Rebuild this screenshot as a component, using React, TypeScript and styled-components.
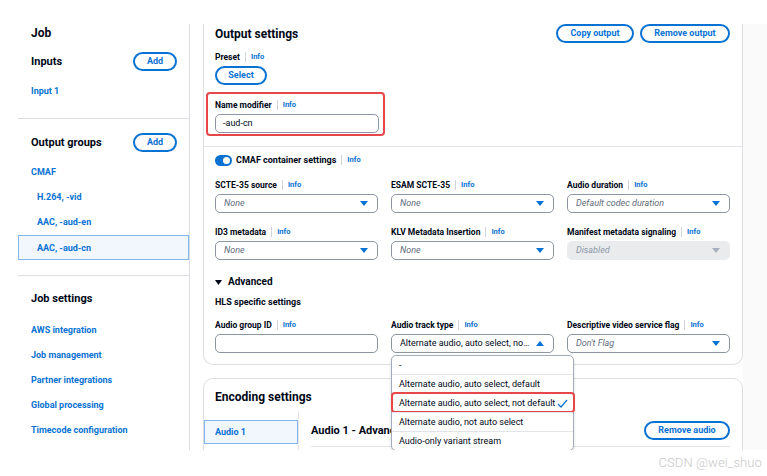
import React from "react";
import styled, { createGlobalStyle } from "styled-components";

const BLUE = "#0972d3";
const TEXT = "#000716";
const MUTED = "#5f6b7a";
const LINE = "#e3e4e8";
const FONT = `Roboto, "Liberation Sans", Arial, sans-serif`;

const GlobalStyle = createGlobalStyle`
  html, body { margin: 0; padding: 0; background: #ffffff; }
  body { font-family: ${FONT}; color: ${TEXT}; }
  *, *::before, *::after { box-sizing: border-box; }
`;

const Page = styled.div`
  position: relative;
  width: 767px;
  height: 476px;
  overflow: hidden;
  background: #fff;
`;

const Frame = styled.div`
  display: flex;
  margin-top: 24px;
  height: 426px;
  padding-left: 18px;
  overflow: hidden;
`;

/* ---------- Sidebar ---------- */
const Sidebar = styled.nav`
  width: 172px;
  flex: none;
  border-right: 1px solid #dcdde1;
  display: flex;
  flex-direction: column;
`;

const SideSection = styled.section<{ $pt: number; $pb?: number; $divider?: boolean }>`
  display: flex;
  flex-direction: column;
  padding-top: ${(p) => p.$pt}px;
  padding-bottom: ${(p) => p.$pb ?? 0}px;
  border-bottom: ${(p) => (p.$divider ? "1px solid #dcdde1" : "none")};
`;

const SideTitle = styled.h2`
  margin: 0;
  padding-left: 13px;
  font: 700 12px/16px ${FONT};
  color: ${TEXT};
`;

const SideHeadRow = styled.div<{ $mt?: number }>`
  display: flex;
  align-items: center;
  justify-content: space-between;
  height: 19px;
  margin-top: ${(p) => p.$mt ?? 0}px;
  padding: 0 12px 0 13px;
`;

const SideHeading = styled.h3<{ $inset?: boolean }>`
  margin: 0;
  padding-left: ${(p) => (p.$inset ? 13 : 0)}px;
  font: 700 11px/16px ${FONT};
  color: ${TEXT};
`;

const NavList = styled.ul<{ $mt: number }>`
  list-style: none;
  margin: ${(p) => p.$mt}px 0 0;
  padding: 0;
`;

const NavItem = styled.li<{ $indent: number; $active?: boolean }>`
  height: 25px;
  display: flex;
  align-items: center;
  padding-left: ${(p) => (p.$active ? p.$indent - 1 : p.$indent)}px;
  padding-bottom: ${(p) => (p.$active ? 0 : 2)}px;
  font: 700 9px/12px ${FONT};
  color: ${BLUE};
  white-space: nowrap;
  background: ${(p) => (p.$active ? "#f1f7fd" : "transparent")};
  border: ${(p) => (p.$active ? "1px solid #7fb6ee" : "none")};
`;

/* ---------- Buttons ---------- */
const PillButton = styled.button<{ $w: number }>`
  width: ${(p) => p.$w}px;
  height: 19px;
  padding: 0;
  flex: none;
  border: 2px solid ${BLUE};
  border-radius: 20px;
  background: #fff;
  color: ${BLUE};
  font: 700 9px/15px ${FONT};
  display: inline-flex;
  align-items: center;
  justify-content: center;
`;

const ButtonGroup = styled.div`
  display: flex;
  gap: 6px;
`;

/* ---------- Main ---------- */
const Main = styled.main`
  flex: 1;
  display: flex;
  min-width: 0;
`;

const MainColumn = styled.div`
  width: 553px;
  flex: none;
  padding-left: 13px;
  display: flex;
  flex-direction: column;
  gap: 13px;
`;

const RightGutter = styled.div`
  flex: 1;
  background: #fafafa;
`;

const Card = styled.section<{ $cutTop?: boolean }>`
  flex: none;
  background: #fff;
  border: 1px solid #dedfe3;
  border-top: ${(p) => (p.$cutTop ? "none" : "1px solid #dedfe3")};
  border-radius: ${(p) => (p.$cutTop ? "0 0 10px 10px" : "10px 10px 0 0")};
`;

const CardSection = styled.div<{ $pt: number; $pb: number; $divider?: boolean }>`
  display: flex;
  flex-direction: column;
  padding: ${(p) => p.$pt}px 12px ${(p) => p.$pb}px 11px;
  border-bottom: ${(p) => (p.$divider ? `1px solid ${LINE}` : "none")};
`;

const HeaderRow = styled.div`
  display: flex;
  align-items: center;
  justify-content: space-between;
  height: 19px;
`;

const CardTitle = styled.h2`
  margin: 0;
  font: 700 12px/16px ${FONT};
  color: ${TEXT};
`;

const Field = styled.div<{ $mt?: number; $w?: number }>`
  position: relative;
  display: flex;
  flex-direction: column;
  gap: 2px;
  min-width: 0;
  margin-top: ${(p) => p.$mt ?? 0}px;
  width: ${(p) => (p.$w ? `${p.$w}px` : "auto")};
`;

const HighlightedField = styled(Field)`
  &::after {
    content: "";
    position: absolute;
    inset: -6px -6px -3px -9px;
    border: 2px solid #e8474a;
    border-radius: 4px;
    pointer-events: none;
  }
`;

const LabelRow = styled.div`
  display: flex;
  align-items: center;
  height: 14px;
  font: 700 8.5px/14px ${FONT};
  color: ${TEXT};
  white-space: nowrap;
`;

const InfoSep = styled.span`
  width: 1px;
  height: 10px;
  background: #d1d5db;
  margin: 0 5px;
`;

const InfoLink = styled.span`
  color: ${BLUE};
  font: 700 7.5px/14px ${FONT};
`;

const InputBox = styled.div`
  height: 19px;
  border: 1px solid #8c96a3;
  border-radius: 5px;
  background: #fff;
  display: flex;
  align-items: center;
  padding: 0 7px;
  font: 400 9px/17px ${FONT};
  color: ${TEXT};
`;

const SelectBox = styled.div<{ $disabled?: boolean }>`
  height: 19px;
  border: 1px solid ${(p) => (p.$disabled ? "#e9ebed" : "#8c96a3")};
  border-radius: 5px;
  background: ${(p) => (p.$disabled ? "#e9ebed" : "#fff")};
  display: flex;
  align-items: center;
  gap: 6px;
  padding: 0 9px 0 8px;
`;

const SelectValue = styled.span<{ $placeholder?: boolean; $disabled?: boolean }>`
  flex: 1;
  min-width: 0;
  overflow: hidden;
  white-space: nowrap;
  text-overflow: ellipsis;
  font-family: ${FONT};
  font-size: 9px;
  line-height: 17px;
  font-style: ${(p) => (p.$placeholder ? "italic" : "normal")};
  color: ${(p) => (p.$disabled ? "#8d99a8" : p.$placeholder ? MUTED : TEXT)};
`;

const PillSlot = styled.div`
  display: flex;
`;

const ToggleRow = styled.div`
  display: flex;
  align-items: center;
  height: 14px;
  gap: 4px;
`;

const Toggle = styled.span`
  position: relative;
  width: 17px;
  height: 11px;
  flex: none;
  border-radius: 6px;
  background: ${BLUE};
  &::after {
    content: "";
    position: absolute;
    right: 2px;
    top: 2px;
    width: 7px;
    height: 7px;
    border-radius: 50%;
    background: #fff;
  }
`;

const ToggleLabel = styled(LabelRow)`
  font-size: 9px;
`;

const FieldGrid = styled.div<{ $mt: number }>`
  display: grid;
  grid-template-columns: repeat(3, 1fr);
  column-gap: 13px;
  row-gap: 12px;
  margin-top: ${(p) => p.$mt}px;
`;

const ExpandRow = styled.div<{ $mt: number }>`
  display: flex;
  align-items: center;
  gap: 6px;
  height: 14px;
  margin-top: ${(p) => p.$mt}px;
  font: 700 10px/14px ${FONT};
  color: ${TEXT};
`;

const SubHeading = styled.div<{ $mt: number }>`
  height: 14px;
  margin-top: ${(p) => p.$mt}px;
  font: 700 9px/14px ${FONT};
  color: ${TEXT};
`;

/* ---------- Dropdown ---------- */
const Dropdown = styled.ul`
  position: absolute;
  top: calc(100% + 2px);
  left: 0;
  width: 183px;
  margin: 0;
  padding: 0;
  list-style: none;
  background: #fff;
  border: 1px solid #a3acb9;
  border-radius: 5px;
  box-shadow: 0 1px 3px rgba(0, 7, 22, 0.15);
  z-index: 10;
`;

const Option = styled.li<{ $highlighted?: boolean }>`
  position: relative;
  height: 18px;
  display: flex;
  align-items: center;
  justify-content: space-between;
  padding: 0 5px 0 7px;
  font: 400 9px/12px ${FONT};
  color: ${TEXT};
  white-space: nowrap;
  & + & {
    border-top: 1px solid ${LINE};
    height: 19px;
  }
  ${(p) =>
    p.$highlighted
      ? `&::after {
    content: "";
    position: absolute;
    inset: -2px -2px -1px -1px;
    border: 2px solid #e8474a;
    border-radius: 4px;
  }`
      : ""}
`;

/* ---------- Encoding ---------- */
const EncodingHeading = styled.div`
  padding: 10px 12px 0 11px;
`;

const EncodingBody = styled.div`
  display: flex;
  margin-top: 6px;
  height: 60px;
`;

const TabsColumn = styled.div`
  width: 95px;
  flex: none;
  border-right: 1px solid ${LINE};
  padding-top: 9px;
`;

const Tab = styled.div<{ $active?: boolean }>`
  height: 24px;
  display: flex;
  align-items: center;
  padding-left: 10px;
  background: ${(p) => (p.$active ? "#f1f7fd" : "transparent")};
  border: 1px solid ${(p) => (p.$active ? "#7fb6ee" : "transparent")};
  font: 700 9px/12px ${FONT};
  color: ${BLUE};
`;

const TabContent = styled.div`
  flex: 1;
  min-width: 0;
  padding: 10px 12px 0 12px;
`;

const TabHeader = styled.div`
  display: flex;
  align-items: center;
  justify-content: space-between;
  height: 26px;
  padding-bottom: 6px;
  border-bottom: 1px solid ${LINE};
`;

const TabTitle = styled.h3`
  margin: 0;
  font: 700 11px/16px ${FONT};
  color: ${TEXT};
  white-space: nowrap;
`;

const Watermark = styled.div`
  position: absolute;
  right: 5px;
  bottom: 5px;
  font: 300 13px/16px ${FONT};
  color: #c9c9c9;
  letter-spacing: 0.1px;
`;

/* ---------- Icons ---------- */
const Caret = ({ up, color = BLUE }: { up?: boolean; color?: string }) => (
  <svg width="8" height="5" viewBox="0 0 8 5" style={{ flex: "none" }}>
    <polygon points={up ? "0,5 8,5 4,0" : "0,0 8,0 4,5"} fill={color} />
  </svg>
);

const SmallCaret = () => (
  <svg width="7" height="5" viewBox="0 0 7 5">
    <polygon points="0,0 7,0 3.5,5" fill={TEXT} />
  </svg>
);

const Check = () => (
  <svg width="11" height="9" viewBox="0 0 11 9" style={{ flex: "none" }}>
    <polyline points="1,5 4,8 10,1" fill="none" stroke={BLUE} strokeWidth="1.2" />
  </svg>
);

/* ---------- Pieces ---------- */
const Label = ({ text }: { text: string }) => (
  <LabelRow>
    {text}
    <InfoSep />
    <InfoLink>Info</InfoLink>
  </LabelRow>
);

type SelectSpec = {
  label: string;
  value: string;
  placeholder?: boolean;
  disabled?: boolean;
};

const SelectField = ({ label, value, placeholder = true, disabled }: SelectSpec) => (
  <Field>
    <Label text={label} />
    <SelectBox $disabled={disabled}>
      <SelectValue $placeholder={placeholder} $disabled={disabled}>
        {value}
      </SelectValue>
      <Caret color={disabled ? "#a7b1bd" : BLUE} />
    </SelectBox>
  </Field>
);

const rows: SelectSpec[] = [
  { label: "SCTE-35 source", value: "None" },
  { label: "ESAM SCTE-35", value: "None" },
  { label: "Audio duration", value: "Default codec duration" },
  { label: "ID3 metadata", value: "None" },
  { label: "KLV Metadata Insertion", value: "None" },
  { label: "Manifest metadata signaling", value: "Disabled", disabled: true },
];

const options = [
  "-",
  "Alternate audio, auto select, default",
  "Alternate audio, auto select, not default",
  "Alternate audio, not auto select",
  "Audio-only variant stream",
];

const outputItems = [
  { text: "CMAF", indent: 13 },
  { text: "H.264, -vid", indent: 19 },
  { text: "AAC, -aud-en", indent: 19 },
  { text: "AAC, -aud-cn", indent: 19, active: true },
];

const jobSettings = [
  "AWS integration",
  "Job management",
  "Partner integrations",
  "Global processing",
  "Timecode configuration",
  "Ad signaling",
];

export default function App() {
  return (
    <Page>
      <GlobalStyle />
      <Frame>
        <Sidebar>
          <SideSection $pt={1} $pb={14} $divider>
            <SideTitle>Job</SideTitle>
            <SideHeadRow $mt={11}>
              <SideHeading>Inputs</SideHeading>
              <PillButton $w={44}>Add</PillButton>
            </SideHeadRow>
            <NavList $mt={8}>
              <NavItem $indent={13}>Input 1</NavItem>
            </NavList>
          </SideSection>
          <SideSection $pt={14} $pb={15} $divider>
            <SideHeadRow>
              <SideHeading>Output groups</SideHeading>
              <PillButton $w={44}>Add</PillButton>
            </SideHeadRow>
            <NavList $mt={8}>
              {outputItems.map((it) => (
                <NavItem key={it.text} $indent={it.indent} $active={it.active}>
                  {it.text}
                </NavItem>
              ))}
            </NavList>
          </SideSection>
          <SideSection $pt={15}>
            <SideHeading $inset>Job settings</SideHeading>
            <NavList $mt={11}>
              {jobSettings.map((t) => (
                <NavItem key={t} $indent={13}>
                  {t}
                </NavItem>
              ))}
            </NavList>
          </SideSection>
        </Sidebar>

        <Main>
          <MainColumn>
            <Card $cutTop>
              <CardSection $pt={0} $pb={13} $divider>
                <HeaderRow>
                  <CardTitle>Output settings</CardTitle>
                  <ButtonGroup>
                    <PillButton $w={78}>Copy output</PillButton>
                    <PillButton $w={90}>Remove output</PillButton>
                  </ButtonGroup>
                </HeaderRow>
                <Field $mt={7}>
                  <Label text="Preset" />
                  <PillSlot>
                    <PillButton $w={52}>Select</PillButton>
                  </PillSlot>
                </Field>
                <HighlightedField $mt={13} $w={164}>
                  <Label text="Name modifier" />
                  <InputBox>-aud-cn</InputBox>
                </HighlightedField>
              </CardSection>

              <CardSection $pt={6} $pb={11}>
                <ToggleRow>
                  <Toggle />
                  <ToggleLabel>
                    CMAF container settings
                    <InfoSep />
                    <InfoLink>Info</InfoLink>
                  </ToggleLabel>
                </ToggleRow>
                <FieldGrid $mt={11}>
                  {rows.map((r) => (
                    <SelectField key={r.label} {...r} />
                  ))}
                </FieldGrid>
                <ExpandRow $mt={15}>
                  <SmallCaret />
                  Advanced
                </ExpandRow>
                <SubHeading $mt={6}>HLS specific settings</SubHeading>
                <FieldGrid $mt={9}>
                  <Field>
                    <Label text="Audio group ID" />
                    <InputBox />
                  </Field>
                  <Field>
                    <Label text="Audio track type" />
                    <SelectBox>
                      <SelectValue>Alternate audio, auto select, not default</SelectValue>
                      <Caret up />
                    </SelectBox>
                    <Dropdown>
                      {options.map((o, i) => (
                        <Option key={o} $highlighted={i === 2}>
                          <span>{o}</span>
                          {i === 2 && <Check />}
                        </Option>
                      ))}
                    </Dropdown>
                  </Field>
                  <SelectField label="Descriptive video service flag" value="Don't Flag" />
                </FieldGrid>
              </CardSection>
            </Card>

            <Card>
              <EncodingHeading>
                <CardTitle>Encoding settings</CardTitle>
              </EncodingHeading>
              <EncodingBody>
                <TabsColumn>
                  <Tab $active>Audio 1</Tab>
                </TabsColumn>
                <TabContent>
                  <TabHeader>
                    <TabTitle>Audio 1 - Advanced settings</TabTitle>
                    <PillButton $w={86}>Remove audio</PillButton>
                  </TabHeader>
                </TabContent>
              </EncodingBody>
            </Card>
          </MainColumn>
          <RightGutter />
        </Main>
      </Frame>
      <Watermark>CSDN @wei_shuo</Watermark>
    </Page>
  );
}
